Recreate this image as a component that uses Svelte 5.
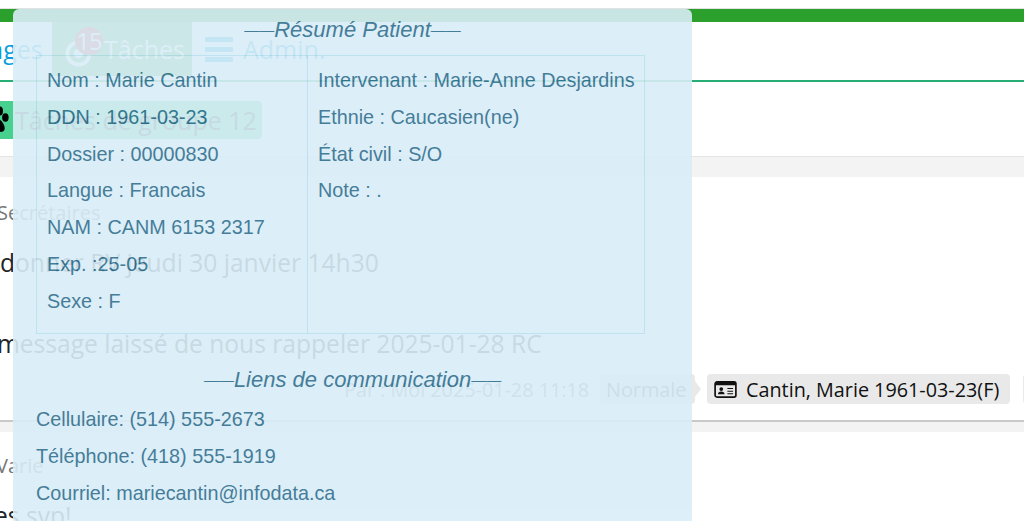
<script>
  const leftInfo = [
    'Nom : Marie Cantin',
    'DDN : 1961-03-23',
    'Dossier : 00000830',
    'Langue : Francais',
    'NAM : CANM 6153 2317',
    'Exp. :25-05',
    'Sexe : F'
  ];
  const rightInfo = [
    'Intervenant : Marie-Anne Desjardins',
    'Ethnie : Caucasien(ne)',
    'État civil : S/O',
    'Note : .'
  ];
  const contacts = [
    'Cellulaire: (514) 555-2673',
    'Téléphone: (418) 555-1919',
    'Courriel: mariecantin@infodata.ca'
  ];
</script>

<div class="page">
  <div class="topBar"></div>

  <nav class="tabs">
    <span class="tab messages">Messages</span>
    <span class="tab tasks">
      <svg class="bullseye" viewBox="0 0 28 28" aria-hidden="true">
        <circle cx="14" cy="14" r="11.5" fill="none" stroke="#fff" stroke-width="4" />
        <circle cx="14" cy="14" r="5" fill="#fff" />
      </svg>
      <span class="badge">15</span>
      Tâches
    </span>
    <span class="tab admin">
      <span class="burger"><i></i><i></i><i></i></span>
      Admin.
    </span>
  </nav>

  <div class="groupRow">
    <span class="groupButton">
      <svg class="paw" viewBox="0 0 24 24" aria-hidden="true">
        <ellipse cx="5" cy="10" rx="2.6" ry="3.4" />
        <ellipse cx="9.5" cy="4.8" rx="2.6" ry="3.6" />
        <ellipse cx="15" cy="4.8" rx="2.6" ry="3.6" />
        <ellipse cx="19.5" cy="10" rx="2.6" ry="3.4" />
        <path d="M12 10.500c-3.400 0-7 4.600-7 8 0 2.200 1.700 3 3.400 3 1.500 0 2.400-.7 3.600-.7s2.100.7 3.600.7c1.700 0 3.400-.8 3.400-3 0-3.400-3.600-8-7-8z" />
      </svg>
      Tâches de groupe 12
    </span>
  </div>

  <div class="gap"></div>

  <section class="card first">
    <div class="category">Secrétaires</div>
    <p class="line appointment">donner RV jeudi 30 janvier 14h30</p>
    <p class="line note">message laissé de nous rappeler 2025-01-28 RC</p>
    <div class="meta">
      <span class="author">Par : Moi 2025-01-28 11:18</span>
      <span class="priority">Normale</span>
      <span class="patientChip">
        <svg class="idCard" viewBox="0 0 24 18" aria-hidden="true">
          <rect x="1" y="1" width="22" height="16" rx="2" fill="none" stroke="#111" stroke-width="1.800" />
          <rect x="1" y="1" width="22" height="3.500" fill="#111" />
          <circle cx="7.500" cy="8.500" r="2" fill="#111" />
          <path d="M4 14c0-2 1.500-3 3.500-3s3.500 1 3.500 3z" fill="#111" />
          <path d="M14 8h6M14 10.800h6M14 13.500h6" stroke="#111" stroke-width="1.200" />
        </svg>
        Cantin, Marie 1961-03-23(F)
      </span>
      <span class="patientChip next"></span>
    </div>
  </section>

  <div class="gap small"></div>

  <section class="card">
    <div class="category second">Varie</div>
    <p class="line closing">es svp!</p>
  </section>

  <aside class="summary">
    <h4 class="heading"><span class="dash">——</span>Résumé Patient<span class="dash">——</span></h4>
    <div class="infoTable">
      <div class="infoCol">
        {#each leftInfo as row}
          <div class="infoRow">{row}</div>
        {/each}
      </div>
      <div class="infoCol">
        {#each rightInfo as row}
          <div class="infoRow">{row}</div>
        {/each}
      </div>
    </div>
    <h4 class="heading links"><span class="dash">——</span>Liens de communication<span class="dash">——</span></h4>
    <div class="contacts">
      {#each contacts as row}
        <div class="infoRow">{row}</div>
      {/each}
    </div>
  </aside>
</div>

<style>
  :global(body) {
    margin: 0;
    background: #fff;
  }

  .page {
    position: relative;
    width: 1024px;
    height: 521px;
    overflow: hidden;
    background: #fff;
    font-family: 'Open Sans', sans-serif;
    color: #212529;
  }

  .topBar {
    height: 13px;
    margin-top: 8px;
    border-top: 1px solid #e2e2e2;
    background: #2ca02c;
  }

  .tabs {
    display: flex;
    align-items: stretch;
    height: 58px;
    margin-left: -71px;
    border-bottom: 2px solid #27ae75;
    font-size: 25px;
  }

  .tab {
    display: flex;
    align-items: center;
    height: 54px;
  }

  .messages {
    width: 123px;
    color: #0a9fdc;
  }

  .tasks {
    position: relative;
    box-sizing: border-box;
    width: 140px;
    padding-left: 52px;
    background: #5cb85c;
    color: #fff;
  }

  .bullseye {
    position: absolute;
    left: 13px;
    top: 18px;
    width: 27px;
    height: 27px;
  }

  .badge {
    position: absolute;
    left: 23px;
    top: 5px;
    width: 28px;
    height: 28px;
    border-radius: 50%;
    background: #dc3545;
    color: #fff;
    font-size: 24px;
    line-height: 28px;
    letter-spacing: -1px;
    text-align: center;
  }

  .admin {
    gap: 10px;
    margin-left: 13px;
    color: #0a9fdc;
  }

  .burger {
    display: flex;
    flex-direction: column;
    gap: 5px;
    width: 28px;
  }

  .burger i {
    display: block;
    height: 5px;
    border-radius: 1px;
    background: #0a9fdc;
  }

  .groupRow {
    display: flex;
    align-items: center;
    height: 74px;
    box-sizing: border-box;
    padding-top: 1px;
  }

  .groupButton {
    display: flex;
    align-items: center;
    gap: 4px;
    height: 38px;
    margin-left: -31px;
    padding: 0 5px 0 12px;
    border-radius: 4px;
    background: #48d08f;
    font-size: 25px;
    color: #222;
  }

  .paw {
    width: 30px;
    height: 30px;
    fill: #000;
  }

  .gap {
    height: 20px;
    border-top: 1px solid #e4e4e4;
    background: #f3f3f3;
  }

  .gap.small {
    height: 10px;
    border-top: 2px solid #c9c9c9;
  }

  .card {
    background: #fff;
  }

  .card.first {
    height: 243px;
  }

  .category {
    padding-top: 23px;
    margin-left: -3px;
    font-size: 20px;
    line-height: 26px;
    color: #777;
  }

  .category.second {
    padding-top: 21px;
    margin-left: -4px;
  }

  .line {
    margin: 0;
    font-size: 24.600px;
    line-height: 34px;
    white-space: nowrap;
  }

  .appointment {
    margin-top: 20px;
  }

  .note {
    margin-top: 47px;
    margin-left: -3px;
  }

  .closing {
    margin-top: 20px;
    margin-left: -6px;
  }

  .meta {
    display: flex;
    align-items: center;
    margin-top: 13px;
    margin-left: 344px;
    font-size: 19.800px;
    white-space: nowrap;
  }

  .author {
    flex: none;
    width: 256px;
    color: #777;
  }

  .priority {
    position: relative;
    flex: none;
    display: flex;
    align-items: center;
    box-sizing: border-box;
    width: 95px;
    height: 30px;
    padding: 0 6px;
    border-radius: 4px;
    background: #e9e9e9;
    color: #555;
  }

  .priority::after {
    content: '';
    position: absolute;
    right: -6px;
    top: 7px;
    border-left: 6px solid #e9e9e9;
    border-top: 8px solid transparent;
    border-bottom: 8px solid transparent;
  }

  .patientChip {
    display: flex;
    align-items: center;
    gap: 9px;
    box-sizing: border-box;
    flex: none;
    width: 303px;
    height: 30px;
    margin-left: 12px;
    padding: 0 8px 0 7px;
    border-radius: 4px;
    background: #e9e9e9;
    color: #111;
  }

  .patientChip.next {
    width: 40px;
    margin-left: 13px;
  }

  .idCard {
    flex: none;
    width: 23px;
    height: 17px;
  }

  .summary {
    position: absolute;
    left: 13px;
    top: 9px;
    box-sizing: border-box;
    width: 679px;
    height: 530px;
    padding: 0 23px;
    border-radius: 6px 6px 0 0;
    background: #d9edf7;
    opacity: 0.9;
    font-family: 'Liberation Sans', Arial, sans-serif;
    font-size: 19.800px;
    color: #31708f;
  }

  .heading {
    margin: 0;
    padding-top: 9px;
    font-size: 22px;
    font-style: italic;
    font-weight: 400;
    line-height: 23px;
    text-align: center;
  }

  .heading.links {
    padding-top: 34px;
  }

  .dash {
    font-size: 15px;
    font-style: normal;
    vertical-align: 2px;
  }

  .infoTable {
    display: grid;
    grid-template-columns: 270px 1fr;
    box-sizing: border-box;
    width: 609px;
    height: 279px;
    margin-top: 14px;
    border: 1px solid #b8dfee;
  }

  .infoCol {
    padding: 6px 0 0 10px;
  }

  .infoCol + .infoCol {
    border-left: 1px solid #b8dfee;
  }

  .infoRow {
    line-height: 36.800px;
    white-space: nowrap;
  }

  .contacts {
    margin-top: 10px;
  }
</style>
